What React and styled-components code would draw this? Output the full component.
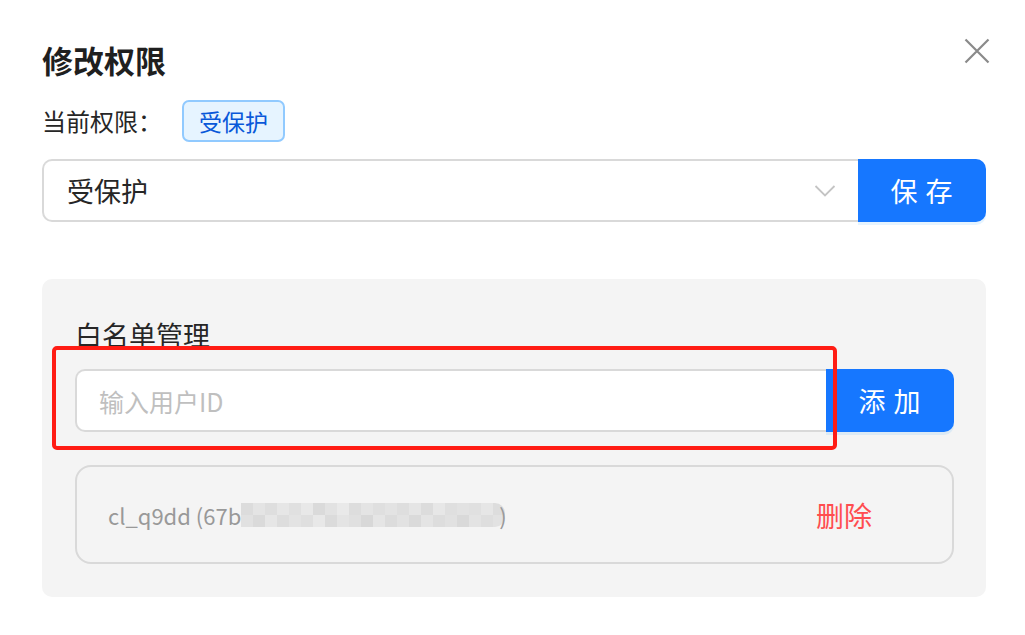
import React from 'react';
import styled, { createGlobalStyle } from 'styled-components';

const GlobalStyle = createGlobalStyle`
  html, body {
    margin: 0;
    background: #fff;
    font-family: "Noto Sans CJK SC", "Noto Sans", sans-serif;
  }
`;

const mosaicShades = [
  ['#dcdcdc', '#e4e4e4', '#dedede', '#e6e6e6', '#e0e0e0', '#e8e8e8', '#dadada', '#e2e2e2', '#e9e9e9', '#dddddd', '#e4e4e4', '#dfdfdf', '#e3e3e3', '#dedede', '#e5e5e5', '#dcdcdc', '#e7e7e7', '#dfdfdf', '#e2e2e2', '#e0e0e0', '#e6e6e6', '#dddddd'],
  ['#e1e1e1', '#dadada', '#e6e6e6', '#dddddd', '#e3e3e3', '#dfdfdf', '#e8e8e8', '#dbdbdb', '#e4e4e4', '#e0e0e0', '#d8d8d8', '#e5e5e5', '#dcdcdc', '#e2e2e2', '#dadada', '#e4e4e4', '#dddddd', '#e1e1e1', '#d9d9d9', '#e3e3e3', '#dedede', '#e2e2e2'],
];

const Permission = () => {
  return (
    <>
      <GlobalStyle />
      <Modal>
        <Header>
          <Title>修改权限</Title>
          <CloseButton aria-label="close">
            <svg width="26" height="26" viewBox="0 0 26 26">
              <path d="M1.5 1.5 L24.5 24.5 M24.5 1.5 L1.5 24.5" stroke="#8a8a8a" strokeWidth="2.2" fill="none" />
            </svg>
          </CloseButton>
        </Header>

        <CurrentRow>
          <Label>当前权限：</Label>
          <Tag>受保护</Tag>
        </CurrentRow>

        <Compact>
          <Select>
            <span>受保护</span>
            <svg width="22" height="14" viewBox="0 0 22 14">
              <path d="M1.5 2 L11 11.5 L20.5 2" stroke="#c4c4c4" strokeWidth="1.8" fill="none" />
            </svg>
          </Select>
          <PrimaryButton>保 存</PrimaryButton>
        </Compact>

        <Panel>
          <PanelTitle>白名单管理</PanelTitle>
          <Compact>
            <Input placeholder="输入用户ID" />
            <PrimaryButton>添 加</PrimaryButton>
          </Compact>
          <ListItem>
            <UserText>
              cl_q9dd (67b
              <Mosaic>
                {mosaicShades.map((row, r) => (
                  <MosaicRow key={r}>
                    {row.map((shade, i) => (
                      <Cell key={i} style={{ background: shade }} />
                    ))}
                  </MosaicRow>
                ))}
              </Mosaic>
              )
            </UserText>
            <DeleteButton>删除</DeleteButton>
          </ListItem>
          <Highlight />
        </Panel>
      </Modal>
    </>
  );
};

const Modal = styled.div`
  padding: 40px 39px 38px 42px;
  color: #1f1f1f;
`;

const Header = styled.div`
  display: flex;
  justify-content: space-between;
  align-items: flex-start;
`;

const Title = styled.h2`
  margin: 0;
  font-size: 31px;
  line-height: 40px;
  font-weight: 700;
  color: #1f1f1f;
`;

const CloseButton = styled.button`
  border: none;
  background: transparent;
  padding: 0;
  margin: -4px -6px 0 0;
  width: 30px;
  height: 30px;
  display: flex;
  align-items: center;
  justify-content: center;
`;

const CurrentRow = styled.div`
  display: flex;
  align-items: center;
  gap: 20px;
  margin-top: 20px;
`;

const Label = styled.span`
  font-size: 24px;
  line-height: 34px;
  color: #262626;
`;

const Tag = styled.span`
  display: inline-flex;
  align-items: center;
  height: 42px;
  box-sizing: border-box;
  padding: 0 15px;
  font-size: 23px;
  color: #0958d9;
  background: #e6f4ff;
  border: 2px solid #91caff;
  border-radius: 7px;
`;

const Compact = styled.div`
  display: flex;
  height: 63px;
  ${CurrentRow} + & {
    margin-top: 17px;
  }
`;

const Select = styled.div`
  flex: 1;
  display: flex;
  align-items: center;
  justify-content: space-between;
  box-sizing: border-box;
  padding: 0 22px 0 23px;
  background: #fff;
  border: 2px solid #d9d9d9;
  border-right: none;
  border-radius: 10px 0 0 10px;
  font-size: 27px;
  color: #262626;
`;

const Input = styled.input`
  flex: 1;
  min-width: 0;
  box-sizing: border-box;
  padding: 0 22px;
  background: #fff;
  border: 2px solid #d9d9d9;
  border-right: none;
  border-radius: 10px 0 0 10px;
  font-family: inherit;
  font-size: 25px;
  color: #262626;
  outline: none;
  &::placeholder {
    color: #bfbfbf;
  }
`;

const PrimaryButton = styled.button`
  width: 128px;
  border: none;
  background: #1677ff;
  color: #fff;
  font-family: inherit;
  font-size: 27px;
  letter-spacing: 1px;
  border-radius: 0 10px 10px 0;
  box-shadow: 0 3px 0 rgba(5, 145, 255, 0.1);
  cursor: pointer;
`;

const Panel = styled.div`
  position: relative;
  margin-top: 57px;
  padding: 38px 32px 33px 33px;
  background: #f4f4f4;
  border-radius: 10px;
`;

const PanelTitle = styled.div`
  font-size: 27px;
  line-height: 36px;
  color: #262626;
  margin-bottom: 16px;
`;

const ListItem = styled.div`
  display: flex;
  align-items: center;
  justify-content: space-between;
  height: 99px;
  box-sizing: border-box;
  margin-top: 33px;
  padding: 0 80px 0 31px;
  border: 2px solid #d9d9d9;
  border-radius: 16px;
`;

const UserText = styled.span`
  display: inline-flex;
  align-items: center;
  font-size: 22px;
  color: #999;
`;

const Mosaic = styled.span`
  display: inline-flex;
  flex-direction: column;
  margin: 0 -6px 0 0;
  border-radius: 0 10px 10px 0;
  overflow: hidden;
`;

const MosaicRow = styled.span`
  display: flex;
`;

const Cell = styled.span`
  width: 12px;
  height: 12px;
`;

const DeleteButton = styled.button`
  border: none;
  background: transparent;
  padding: 0;
  font-family: inherit;
  font-size: 28px;
  color: #ff4d4f;
  cursor: pointer;
`;

const Highlight = styled.div`
  position: absolute;
  left: 10px;
  top: 67px;
  width: 785px;
  height: 104px;
  box-sizing: border-box;
  border: 4px solid #ff1c14;
  border-radius: 5px;
  pointer-events: none;
`;

export default Permission;
